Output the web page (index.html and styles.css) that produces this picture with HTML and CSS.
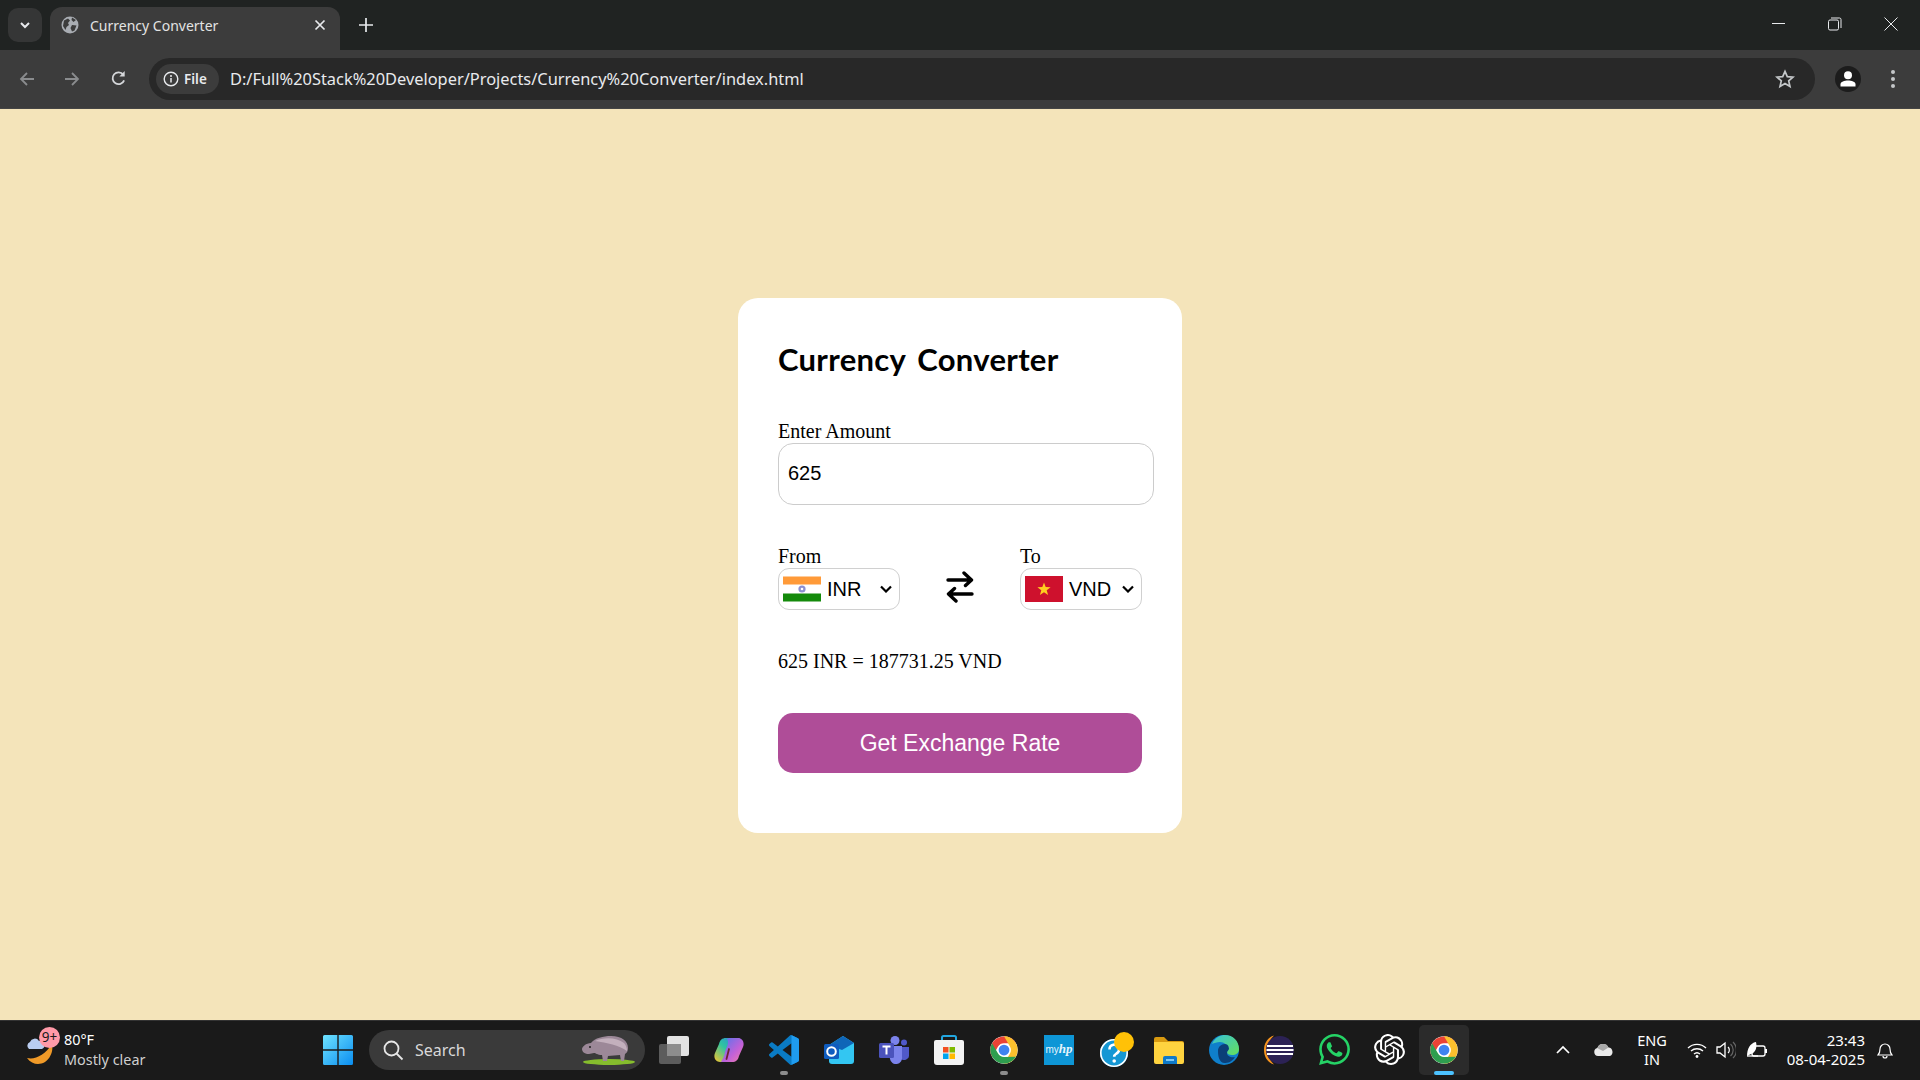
FILE: index.html
```html
<!DOCTYPE html>
<html lang="en">
<head>
<meta charset="utf-8">
<title>Currency Converter</title>
<link rel="stylesheet" href="styles.css">
</head>
<body>
<svg class="defs" width="0" height="0" aria-hidden="true">
  <symbol id="chrome" viewBox="0 0 48 48">
    <circle cx="24" cy="24" r="22" fill="#fff"/>
    <path fill="#ea4335" d="M43.05 13A22 22 0 0 0 4.95 35L14.47 18.5A11 11 0 0 1 24 13Z"/>
    <path fill="#fbc02d" transform="rotate(120 24 24)" d="M43.05 13A22 22 0 0 0 4.95 35L14.47 18.5A11 11 0 0 1 24 13Z"/>
    <path fill="#2e9e4f" transform="rotate(240 24 24)" d="M43.05 13A22 22 0 0 0 4.95 35L14.47 18.5A11 11 0 0 1 24 13Z"/>
    <circle cx="24" cy="24" r="8.6" fill="#3f83f0"/>
  </symbol>
</svg>

<header class="tabstrip">
  <div class="tab-search"><svg width="14" height="14" viewBox="0 0 14 14"><path d="M3 5l4 4 4-4" fill="none" stroke="#e8eaed" stroke-width="2"/></svg></div>
  <div class="tab">
    <svg class="favicon" width="18" height="18" viewBox="0 0 18 18"><circle cx="9" cy="9" r="8.5" fill="#a9adb3"/><path fill="#3c3c3c" d="M3 4.500 7 2.500 9 4.500 7 7 8 9 5.500 11 4.500 14 2 10ZM11 1.500 15 4 12.500 6 10.500 4ZM11 9 15.500 9.500 13.500 14.500 11 15.500 9.500 12Z"/></svg>
    <span class="tab-title">Currency Converter</span>
    <svg class="tab-close" width="12" height="12" viewBox="0 0 12 12"><path d="M1.500 1.500l9 9m0-9l-9 9" stroke="#e8eaed" stroke-width="1.700"/></svg>
  </div>
  <svg class="new-tab" width="14" height="14" viewBox="0 0 14 14"><path d="M7 0v14M0 7h14" stroke="#e8eaed" stroke-width="1.700"/></svg>
  <div class="win-controls">
    <svg width="14" height="14" viewBox="0 0 14 14"><path d="M0 6.500h13" stroke="#e8eaed"/></svg>
    <svg width="14" height="14" viewBox="0 0 14 14"><rect x="0.500" y="3" width="10" height="10" rx="1.500" fill="none" stroke="#e8eaed"/><path d="M3 1h8.500a1.500 1.500 0 0 1 1.500 1.500V11" fill="none" stroke="#e8eaed"/></svg>
    <svg width="14" height="14" viewBox="0 0 14 14"><path d="M.5.500l13 13m0-13l-13 13" stroke="#e8eaed"/></svg>
  </div>
</header>

<nav class="toolbar">
  <svg class="nav-icon" width="16" height="16" viewBox="0 0 16 16"><path d="M15 8H2M8 2 2 8l6 6" fill="none" stroke="#8a8c8e" stroke-width="1.800"/></svg>
  <svg class="nav-icon" width="16" height="16" viewBox="0 0 16 16"><path d="M1 8h13M8 2l6 6-6 6" fill="none" stroke="#8a8c8e" stroke-width="1.800"/></svg>
  <svg class="nav-icon" width="17" height="17" viewBox="0 0 16 16"><path d="M13.300 9.800A5.600 5.600 0 1 1 12.500 4.300" fill="none" stroke="#d5d7da" stroke-width="1.700"/><path d="M13.800 1v5h-5" fill="#d5d7da"/></svg>
  <div class="omnibox">
    <div class="chip">
      <svg width="16" height="16" viewBox="0 0 16 16"><circle cx="8" cy="8" r="6.800" fill="none" stroke="#e8eaed" stroke-width="1.400"/><path d="M8 7v4.500" stroke="#e8eaed" stroke-width="1.500"/><circle cx="8" cy="4.900" r="1" fill="#e8eaed"/></svg>
      <span>File</span>
    </div>
    <span class="url">D:/Full%20Stack%20Developer/Projects/Currency%20Converter/index.html</span>
    <svg class="star" width="20" height="20" viewBox="0 0 20 20"><path d="M10 2.400l2.300 5.200 5.700.5-4.300 3.800 1.300 5.600L10 14.600l-5 2.900 1.300-5.600L2 8.100l5.700-.5Z" fill="none" stroke="#c4c7c9" stroke-width="1.700"/></svg>
  </div>
  <div class="avatar"><svg width="20" height="20" viewBox="0 0 20 20"><circle cx="10" cy="6.200" r="4" fill="#fff"/><path d="M2.500 17.500v-2.300c0-2.500 4-3.700 7.500-3.700s7.500 1.200 7.500 3.700v2.300Z" fill="#fff"/></svg></div>
  <svg class="menu" width="6" height="20" viewBox="0 0 6 20"><circle cx="3" cy="3" r="2" fill="#c4c7c9"/><circle cx="3" cy="10" r="2" fill="#c4c7c9"/><circle cx="3" cy="17" r="2" fill="#c4c7c9"/></svg>
</nav>

<main class="page">
  <form class="card">
    <h2 class="title">Currency Converter</h2>
    <label class="field-label" for="amount">Enter Amount</label>
    <input class="amount" id="amount" type="text" value="625">
    <div class="currency-row">
      <div class="currency">
        <p class="field-label">From</p>
        <div class="select">
          <svg class="flag" width="38" height="26" viewBox="0 0 38 26"><rect width="38" height="26" fill="#fff"/><rect width="38" height="8" y="0.500" fill="#ff9a38"/><rect width="38" height="8" y="17.500" fill="#148a0b"/><circle cx="19" cy="13" r="3.600" fill="#8c8fd0"/><circle cx="19" cy="13" r="1.300" fill="#fff"/></svg>
          <span class="code">INR</span>
          <svg class="caret" width="12" height="8" viewBox="0 0 12 8"><path d="M1 1.500l5 5 5-5" fill="none" stroke="#000" stroke-width="2.200"/></svg>
        </div>
      </div>
      <svg class="swap" width="28" height="32" viewBox="0 0 28 32"><path d="M2 9h23M18 2l7.500 7-6 5.500" fill="none" stroke="#000" stroke-width="3.400" stroke-linecap="round" stroke-linejoin="round"/><path d="M26 23H3M10 30l-7.500-7 6-5.500" fill="none" stroke="#000" stroke-width="3.400" stroke-linecap="round" stroke-linejoin="round"/></svg>
      <div class="currency">
        <p class="field-label">To</p>
        <div class="select">
          <svg class="flag" width="38" height="26" viewBox="0 0 38 26"><rect width="38" height="26" fill="#ce112d"/><path d="M19 6.500l1.700 4.600 4.900.2-3.900 3 1.400 4.700-4.100-2.700-4.100 2.700 1.400-4.700-3.900-3 4.900-.2Z" fill="#ffcd1f"/></svg>
          <span class="code">VND</span>
          <svg class="caret" width="12" height="8" viewBox="0 0 12 8"><path d="M1 1.500l5 5 5-5" fill="none" stroke="#000" stroke-width="2.200"/></svg>
        </div>
      </div>
    </div>
    <p class="result">625 INR = 187731.25 VND</p>
    <button class="submit" type="button">Get Exchange Rate</button>
  </form>
</main>

<footer class="taskbar">
  <div class="weather">
    <div class="weather-icon">
      <svg width="32" height="36" viewBox="0 0 32 36"><path d="M27 12c2 9-4 20-14 20-4 0-8-2-11-6 8 2 18-3 25-14Z" fill="#f09a28"/><path d="M4 17a4 4 0 0 1 1-7 5 5 0 0 1 9-1 4 4 0 0 1 3 8Z" fill="#b9cdf0"/></svg>
      <span class="badge">9+</span>
    </div>
    <div class="weather-text"><span class="temp">80°F</span><span class="cond">Mostly clear</span></div>
  </div>
  <svg class="start" width="30" height="30" viewBox="0 0 30 30"><defs><linearGradient id="win" x1="0" y1="0" x2="1" y2="1"><stop offset="0" stop-color="#6fe3ff"/><stop offset="1" stop-color="#0a8df0"/></linearGradient></defs><path fill="url(#win)" d="M0 1.500A1.500 1.500 0 0 1 1.500 0H14.300V14.300H0ZM15.700 0H28.500A1.500 1.500 0 0 1 30 1.500V14.300H15.700ZM0 15.700H14.300V30H1.500A1.500 1.500 0 0 1 0 28.500ZM15.700 15.700H30V28.500A1.500 1.500 0 0 1 28.500 30H15.700Z"/></svg>
  <div class="search">
    <svg width="22" height="22" viewBox="0 0 22 22"><circle cx="9.500" cy="9.500" r="7" fill="none" stroke="#e6e6e6" stroke-width="1.800"/><path d="M14.500 14.500l6 6" stroke="#e6e6e6" stroke-width="1.800"/></svg>
    <span class="search-text">Search</span>
    <svg class="hippo" width="56" height="30" viewBox="0 0 56 30"><ellipse cx="30" cy="27" rx="26" ry="3" fill="#86bd2d"/><path d="M3 14c0-2 4-6 9-6 4-5 12-7 20-7 11 0 17 5 17 12 0 3-1 5-3 6l-1 7h-3l-1-6-12 1-1 5h-4l-1-6c-5 0-6-2-8-2l-5 1c-4 0-7-2-7-5Z" fill="#9c8898"/><path d="M16 6c8-4 22-4 29 2 2 2 3 5 3 8-8-6-20-8-32-10Z" fill="#c3b0bd"/><circle cx="11" cy="12" r="1" fill="#222"/></svg>
  </div>
  <div class="apps">
    <div class="app"><svg width="30" height="28" viewBox="0 0 30 28"><rect x="0" y="8" width="22" height="20" rx="2" fill="#5c5c5c"/><rect x="8" y="0" width="22" height="20" rx="2" fill="#f4f4f4" opacity=".92"/><rect x="8" y="8" width="14" height="12" fill="#8d8d8d"/></svg></div>
    <div class="app"><svg width="30" height="26" viewBox="0 0 30 26"><defs><linearGradient id="cop1" x1="0" y1="1" x2="1" y2="0"><stop offset="0" stop-color="#f7c52b"/><stop offset=".5" stop-color="#2fc4a0"/><stop offset="1" stop-color="#2a7fe8"/></linearGradient><linearGradient id="cop2" x1="0" y1="0" x2="1" y2="1"><stop offset="0" stop-color="#4f76ee"/><stop offset=".6" stop-color="#c261d8"/><stop offset="1" stop-color="#f57ea8"/></linearGradient></defs><path d="M23 1H12C8 1 6 3 5 7L1 16c-2 5 1 9 5 9h8c3 0 5-2 6-5l3-13c.5-3 1-5 3-6Z" fill="url(#cop1)"/><path d="M7 25h11c4 0 6-2 7-6l4-9c2-5-1-9-5-9h-8c-1 0-2 0-3 1 3 4-1 9-2 13-.5 3-1 5-4 10Z" fill="url(#cop2)"/><path d="M15 12l-2.500 10" stroke="#6d2333" stroke-width="1.800" stroke-linecap="round"/></svg></div>
    <div class="app on"><svg width="30" height="30" viewBox="0 0 100 100"><path fill="#0a7bc4" d="M96.500 10.800 75.900.9a6.200 6.200 0 0 0-7.100 1.200L29.400 38 12.200 25a4.100 4.100 0 0 0-5.300.2L1.400 30.300a4.200 4.200 0 0 0 0 6.100L16.300 50 1.400 63.600a4.200 4.200 0 0 0 0 6.100l5.500 5a4.100 4.100 0 0 0 5.300.2L29.400 62l39.400 35.900a6.200 6.200 0 0 0 7.100 1.200l20.600-9.900a6.200 6.200 0 0 0 3.500-5.600V16.400a6.200 6.200 0 0 0-3.500-5.600ZM75 72.700 45.100 50 75 27.300Z"/><path fill="#1f9cf0" d="M75 0.500a6 6 0 0 1 .9.400l20.600 9.900a6.200 6.200 0 0 1 3.500 5.600v67.200a6.200 6.200 0 0 1-3.500 5.600L75.900 99.100a6 6 0 0 1-.9.400Z"/></svg></div>
    <div class="app"><svg width="30" height="28" viewBox="0 0 30 28"><path d="M5 9 19 0l11 7v18a3 3 0 0 1-3 3H8a3 3 0 0 1-3-3Z" fill="#33c6f2"/><path d="M5 9 19 0l11 7-12 7Z" fill="#0f66b8"/><rect x="0" y="8" width="15" height="15" rx="1.500" fill="#0f5cbf"/><circle cx="7.500" cy="15.500" r="4.300" fill="none" stroke="#fff" stroke-width="2"/></svg></div>
    <div class="app"><svg width="30" height="28" viewBox="0 0 30 28"><circle cx="16" cy="4.500" r="4.500" fill="#7b83eb"/><circle cx="25" cy="6.500" r="3" fill="#5059c9"/><path d="M21 11h9v9a5 5 0 0 1-8 3Z" fill="#5059c9"/><path d="M9 10h14v11a6 6 0 0 1-12 2Z" fill="#7b83eb"/><rect x="0" y="7" width="15" height="15" rx="1.500" fill="#4b53bc"/><path d="M3.500 10.500h8M7.500 10.500v8" stroke="#fff" stroke-width="2"/></svg></div>
    <div class="app"><svg width="30" height="30" viewBox="0 0 30 30"><path d="M8 5V2.500A1.500 1.500 0 0 1 9.500 1h11A1.500 1.500 0 0 1 22 2.500V5" fill="none" stroke="#22a7e0" stroke-width="2"/><path d="M2 5h26a2 2 0 0 1 2 2v20a3 3 0 0 1-3 3H3a3 3 0 0 1-3-3V7a2 2 0 0 1 2-2Z" fill="#f3f3f3"/><rect x="9" y="12" width="5.500" height="5.500" fill="#f25022"/><rect x="15.500" y="12" width="5.500" height="5.500" fill="#7fba00"/><rect x="9" y="18.500" width="5.500" height="5.500" fill="#00a4ef"/><rect x="15.500" y="18.500" width="5.500" height="5.500" fill="#ffb900"/></svg></div>
    <div class="app on"><svg width="30" height="30"><use href="#chrome"/></svg></div>
    <div class="app"><div class="myhp">my<i>hp</i></div></div>
    <div class="app"><svg class="help" width="34" height="36" viewBox="0 0 34 36"><circle cx="14" cy="21" r="14" fill="#1497d4"/><circle cx="14" cy="21" r="13.200" fill="none" stroke="#fff" stroke-width="1.600"/><path d="M9.500 17.500a4.700 4.700 0 1 1 7 4c-1.500 1-2.300 1.600-2.300 3.200" fill="none" stroke="#fff" stroke-width="2.600"/><circle cx="14.200" cy="29" r="1.800" fill="#fff"/><circle cx="24" cy="10" r="10" fill="#ffc107"/></svg></div>
    <div class="app"><svg width="30" height="28" viewBox="0 0 30 28"><path d="M0 3a2 2 0 0 1 2-2h8l4 4h14a2 2 0 0 1 2 2v4H0Z" fill="#d99a10"/><path d="M0 6h28a2 2 0 0 1 2 2v18a2 2 0 0 1-2 2H2a2 2 0 0 1-2-2Z" fill="#ffd33f"/><path d="M9 28v-6a2 2 0 0 1 2-2h10a2 2 0 0 1 2 2v6Z" fill="#0f79c8"/><rect x="12" y="23" width="8" height="2" fill="#7dc8f5"/></svg></div>
    <div class="app"><svg width="30" height="30" viewBox="0 0 30 30"><defs><linearGradient id="edg" x1="0" y1="0" x2="1" y2="1"><stop offset="0" stop-color="#36c2d8"/><stop offset="1" stop-color="#66e05a"/></linearGradient></defs><circle cx="15" cy="15" r="15" fill="#0f7fcb"/><path d="M3 9C6 2 12 0 16 0c8 0 14 6 14 14 0 4-3 6-7 6-3 0-5-1-5-3 0-1 1-1 1-3 0-4-4-7-8-7-3 0-6 1-8 2Z" fill="url(#edg)"/><path d="M9 16c0-4 3-7 7-7 3 0 4 3 4 5-1 2-2 2-2 4 0 3 4 5 8 4-3 5-7 6-11 6-5-1-6-7-6-12Z" fill="#0b3f78"/></svg></div>
    <div class="app"><svg width="30" height="30" viewBox="0 0 30 30"><path d="M10 .5C4 2 0 8 0 15s4 13 10 14.500C6 26 4 21 4 15S6 4 10 .5Z" fill="#f7941e"/><circle cx="16" cy="15" r="14" fill="#2c2255"/><path d="M3 11h26M2.500 15h27M3 19h26" stroke="#fff" stroke-width="2.200"/></svg></div>
    <div class="app"><svg width="31" height="31" viewBox="0 0 24 24"><path fill="#25d366" d="M17.472 14.382c-.297-.149-1.758-.867-2.03-.967-.273-.099-.471-.148-.67.15-.197.297-.767.966-.94 1.164-.173.199-.347.223-.644.075-.297-.15-1.255-.463-2.39-1.475-.883-.788-1.48-1.761-1.653-2.059-.173-.297-.018-.458.13-.606.134-.133.298-.347.446-.52.149-.174.198-.298.298-.497.099-.198.05-.371-.025-.52-.075-.149-.669-1.612-.916-2.207-.242-.579-.487-.5-.669-.51-.173-.008-.371-.01-.57-.01-.198 0-.52.074-.792.372-.272.297-1.04 1.016-1.04 2.479 0 1.462 1.065 2.875 1.213 3.074.149.198 2.096 3.2 5.077 4.487.709.306 1.262.489 1.694.625.712.227 1.36.195 1.871.118.571-.085 1.758-.719 2.006-1.413.248-.694.248-1.289.173-1.413-.074-.124-.272-.198-.57-.347m-5.421 7.403h-.004a9.87 9.87 0 01-5.031-1.378l-.361-.214-3.741.982.998-3.648-.235-.374a9.86 9.86 0 01-1.51-5.26c.001-5.45 4.436-9.884 9.888-9.884 2.64 0 5.122 1.03 6.988 2.898a9.825 9.825 0 012.893 6.994c-.003 5.45-4.437 9.884-9.885 9.884m8.413-18.297A11.815 11.815 0 0012.05 0C5.495 0 .16 5.335.157 11.892c0 2.096.547 4.142 1.588 5.945L.057 24l6.305-1.654a11.882 11.882 0 005.683 1.448h.005c6.554 0 11.89-5.335 11.893-11.893a11.821 11.821 0 00-3.48-8.413Z"/></svg></div>
    <div class="app"><svg width="31" height="31" viewBox="0 0 24 24"><path fill="#fff" d="M22.2819 9.8211a5.9847 5.9847 0 0 0-.5157-4.9108 6.0462 6.0462 0 0 0-6.5098-2.9A6.0651 6.0651 0 0 0 4.9807 4.1818a5.9847 5.9847 0 0 0-3.9977 2.9 6.0462 6.0462 0 0 0 .7427 7.0966 5.98 5.98 0 0 0 .511 4.9107 6.051 6.051 0 0 0 6.5146 2.9001A5.9847 5.9847 0 0 0 13.2599 24a6.0557 6.0557 0 0 0 5.7718-4.2058 5.9894 5.9894 0 0 0 3.9977-2.9001 6.0557 6.0557 0 0 0-.7475-7.0729zm-9.022 12.6081a4.4755 4.4755 0 0 1-2.8764-1.0408l.1419-.0804 4.7783-2.7582a.7948.7948 0 0 0 .3927-.6813v-6.7369l2.02 1.1686a.071.071 0 0 1 .038.052v5.5826a4.504 4.504 0 0 1-4.4945 4.4944zm-9.6607-4.1254a4.4708 4.4708 0 0 1-.5346-3.0137l.142.0852 4.783 2.7582a.7712.7712 0 0 0 .7806 0l5.8428-3.3685v2.3324a.0804.0804 0 0 1-.0332.0615L9.74 19.9502a4.4992 4.4992 0 0 1-6.1408-1.6464zM2.3408 7.8956a4.485 4.485 0 0 1 2.3655-1.9728V11.6a.7664.7664 0 0 0 .3879.6765l5.8144 3.3543-2.0201 1.1685a.0757.0757 0 0 1-.071 0l-4.8303-2.7865A4.504 4.504 0 0 1 2.3408 7.872zm16.5963 3.8558L13.1038 8.364 15.1192 7.2a.0757.0757 0 0 1 .071 0l4.8303 2.7913a4.4944 4.4944 0 0 1-.6765 8.1042v-5.6772a.79.79 0 0 0-.407-.667zm2.0107-3.0231l-.142-.0852-4.7735-2.7818a.7759.7759 0 0 0-.7854 0L9.409 9.2297V6.8974a.0662.0662 0 0 1 .0284-.0615l4.8303-2.7866a4.4992 4.4992 0 0 1 6.6802 4.66zM8.3065 12.863l-2.02-1.1638a.0804.0804 0 0 1-.038-.0567V6.0742a4.4992 4.4992 0 0 1 7.3757-3.4537l-.142.0805L8.704 5.459a.7948.7948 0 0 0-.3927.6813zm1.0976-2.3654l2.602-1.4998 2.6069 1.4998v2.9994l-2.5974 1.4997-2.6067-1.4997Z"/></svg></div>
    <div class="app active"><svg width="30" height="30"><use href="#chrome"/></svg></div>
  </div>
  <div class="tray">
    <svg class="t-chevron" width="14" height="9" viewBox="0 0 14 9"><path d="M1 8l6-6 6 6" fill="none" stroke="#fff" stroke-width="1.700"/></svg>
    <svg class="t-cloud" width="20" height="13" viewBox="0 0 20 13"><path d="M4 13a4 4 0 0 1-.6-7.900A6 6 0 0 1 14.500 4.500 4.500 4.500 0 0 1 16 13Z" fill="#e9e9e9"/><path d="M3.400 5.100A6 6 0 0 1 14.500 4.500L9 8 5 6Z" fill="#a9a9a9"/></svg>
    <div class="t-lang"><span>ENG</span><span>IN</span></div>
    <svg class="t-wifi" width="20" height="16" viewBox="0 0 20 16"><path d="M1 6a13 13 0 0 1 18 0M4 9a9 9 0 0 1 12 0M7 12a4.500 4.500 0 0 1 6 0" fill="none" stroke="#fff" stroke-width="1.400"/><circle cx="10" cy="14.500" r="1.400" fill="#fff"/></svg>
    <svg class="t-vol" width="20" height="18" viewBox="0 0 20 18"><path d="M1 6h3l5-4v14l-5-4H1Z" fill="none" stroke="#fff" stroke-width="1.300"/><path d="M12 6a4 4 0 0 1 0 6" fill="none" stroke="#fff" stroke-width="1.200"/><path d="M14.500 3a8 8 0 0 1 0 12M17 1a11 11 0 0 1 0 16" fill="none" stroke="#666" stroke-width="1.200"/></svg>
    <svg class="t-batt" width="22" height="18" viewBox="0 0 22 18"><rect x="6" y="5" width="13" height="10" rx="2" fill="none" stroke="#fff" stroke-width="1.300"/><rect x="19" y="8" width="2" height="4" fill="#fff"/><path d="M1 15C1 8 4 2 10 1c1.500 6-1 11-5 12" fill="#fff"/><path d="M1 15h11" stroke="#fff" stroke-width="1.300"/></svg>
    <div class="t-clock"><span>23:43</span><span>08-04-2025</span></div>
    <svg class="t-bell" width="16" height="18" viewBox="0 0 16 18"><path d="M1 14c1.500-1.500 2-2.500 2-6a5 5 0 0 1 10 0c0 3.500.5 4.500 2 6Z" fill="none" stroke="#fff" stroke-width="1.200"/><path d="M6 15a2 2 0 0 0 4 0" fill="none" stroke="#fff" stroke-width="1.200"/></svg>
  </div>
</footer>
</body>
</html>
```
FILE: styles.css
```css
* { box-sizing: border-box; }
html, body { margin: 0; height: 100%; }
body {
  display: flex;
  flex-direction: column;
  height: 100vh;
  overflow: hidden;
  background: #f4e4ba;
  font-family: "Liberation Serif", serif;
}
.defs { position: absolute; }
svg { display: block; flex: none; }

/* browser tab strip */
.tabstrip {
  display: flex;
  align-items: flex-start;
  height: 50px;
  flex: none;
  background: #202322;
  font-family: "Noto Sans", sans-serif;
}
.tab-search {
  display: flex;
  align-items: center;
  justify-content: center;
  width: 34px;
  height: 34px;
  margin: 8px 0 0 8px;
  border-radius: 10px;
  background: #353636;
}
.tab {
  display: flex;
  align-items: center;
  width: 290px;
  height: 43px;
  margin: 7px 0 0 8px;
  padding: 0 12px 7px 11px;
  border-radius: 12px 12px 0 0;
  background: #3c3c3c;
}
.favicon { margin-right: 11px; }
.tab-title { flex: 1; color: #e3e3e3; font-size: 14px; }
.tab-close { margin-right: 2px; }
.new-tab { margin: 18px 0 0 19px; }
.win-controls {
  display: flex;
  gap: 42px;
  margin: 17px 22px 0 auto;
}

/* toolbar */
.toolbar {
  display: flex;
  align-items: center;
  height: 59px;
  flex: none;
  padding: 0 0 1px 19px;
  background: #3c3c3c;
  border-bottom: 1px solid #454545;
}
.nav-icon { margin-right: 29px; }
.nav-icon:nth-child(2) { margin-right: 30px; }
.nav-icon:nth-child(3) { margin-right: 22px; }
.omnibox {
  display: flex;
  align-items: center;
  width: 1666px;
  height: 42px;
  padding: 0 20px 0 7px;
  border-radius: 21px;
  background: #282828;
  font-family: "Noto Sans", sans-serif;
}
.chip {
  display: flex;
  align-items: center;
  gap: 5px;
  height: 30px;
  width: 63px;
  padding-left: 7px;
  border-radius: 15px;
  background: #3c3c3c;
  color: #e8eaed;
  font-size: 13.500px;
  font-weight: 600;
}
.url { flex: 1; margin-left: 11px; color: #e8eaed; font-size: 16.400px; }
.avatar {
  display: flex;
  align-items: center;
  justify-content: center;
  width: 26px;
  height: 26px;
  margin-left: 20px;
  border-radius: 50%;
  background: #1c1c1c;
}
.menu { margin-left: 29px; }

/* page */
.page {
  flex: 1;
  display: flex;
  align-items: center;
  justify-content: center;
  padding-top: 2px;
  background: #f4e4ba;
}
.card {
  width: 444px;
  height: 535px;
  padding: 40px;
  border-radius: 20px;
  background: #fff;
  color: #000;
}
.title {
  margin: 0 0 40px;
  height: 40px;
  font: 700 31px/42px "Lato", "Open Sans", sans-serif;
  letter-spacing: .3px;
  word-spacing: 4px;
  white-space: nowrap;
}
.field-label {
  display: block;
  margin: 0;
  height: 25px;
  font-size: 20px;
  line-height: 27px;
}
.amount {
  display: block;
  width: 376px;
  height: 62px;
  padding: 0 9px 2px;
  border: 1px solid #cccccc;
  border-radius: 15px;
  background: #fff;
  color: #000;
  font: 20px "Liberation Sans", sans-serif;
  outline: none;
}
.currency-row {
  display: flex;
  justify-content: space-between;
  align-items: flex-end;
  margin-top: 38px;
}
.currency { width: 122px; }
.select {
  display: flex;
  align-items: center;
  height: 42px;
  padding-left: 4px;
  border: 1px solid #d0d0d0;
  border-radius: 11px;
  font: 20px "Liberation Sans", sans-serif;
}
.code { flex: 1; margin-left: 6px; }
.caret { margin-right: 7px; }
.swap { margin-bottom: 7px; }
.result {
  margin: 39px 0 0;
  height: 25px;
  font-size: 20px;
  line-height: 25px;
}
.submit {
  display: block;
  width: 364px;
  height: 60px;
  margin-top: 39px;
  border: 0;
  border-radius: 15px;
  background: #af4d98;
  color: #fff;
  font: 23px "Liberation Sans", sans-serif;
}

/* taskbar */
.taskbar {
  display: flex;
  align-items: center;
  height: 60px;
  flex: none;
  padding: 0 0 2px 25px;
  background: #1a1a1a;
  border-top: 1px solid #333;
  color: #fff;
  font-family: "Noto Sans", sans-serif;
}
.weather { display: flex; align-items: center; width: 298px; gap: 7px; }
.weather-icon { position: relative; width: 32px; height: 36px; }
.badge {
  position: absolute;
  top: -5px;
  left: 14px;
  width: 21px;
  height: 21px;
  border-radius: 50%;
  background: #ff9aa8;
  color: #1a1a1a;
  font-size: 13.500px;
  line-height: 21px;
  text-align: center;
}
.weather-text { display: flex; flex-direction: column; font-size: 14.400px; line-height: 20px; }
.temp { color: #fff; }
.cond { color: #cfcfcf; }
.start { margin-right: 16px; }
.search {
  display: flex;
  align-items: center;
  width: 276px;
  height: 40px;
  margin-right: 4px;
  padding: 0 10px 0 13px;
  border-radius: 20px;
  background: #3a3a3a;
}
.search-text { flex: 1; margin-left: 11px; color: #d8d8d8; font-size: 16px; }
.apps { display: flex; }
.app {
  position: relative;
  display: flex;
  align-items: center;
  justify-content: center;
  width: 50px;
  height: 50px;
  margin-right: 5px;
  border-radius: 5px;
}
.app.on::after, .app.active::after {
  content: "";
  position: absolute;
  left: 21px;
  bottom: 0;
  width: 8px;
  height: 4px;
  border-radius: 2px;
  background: #8c8c8c;
}
.app.active { background: #2b2b2b; }
.app.active::after { left: 15px; width: 20px; background: #4cc2ff; }
.help { margin-left: 5px; }
.myhp {
  width: 30px;
  height: 30px;
  background: #0e96d6;
  color: #e6f5fc;
  font: 10px/30px "Liberation Sans", sans-serif;
  text-align: center;
}
.myhp i { font: italic 700 13px "Liberation Serif", serif; }
.tray { display: flex; align-items: center; margin-left: 82px; }
.t-chevron { margin-right: 24px; }
.t-cloud { margin-right: 18px; }
.t-lang, .t-clock { display: flex; flex-direction: column; font-size: 14.500px; line-height: 19px; }
.t-clock { font-size: 15px; }
.t-lang { width: 40px; align-items: center; margin-right: 15px; }
.t-wifi { margin-right: 9px; }
.t-vol { margin-right: 10px; }
.t-batt { margin-right: 0; }
.t-clock { width: 97px; align-items: flex-end; }
.t-bell { margin-left: 12px; }
```
